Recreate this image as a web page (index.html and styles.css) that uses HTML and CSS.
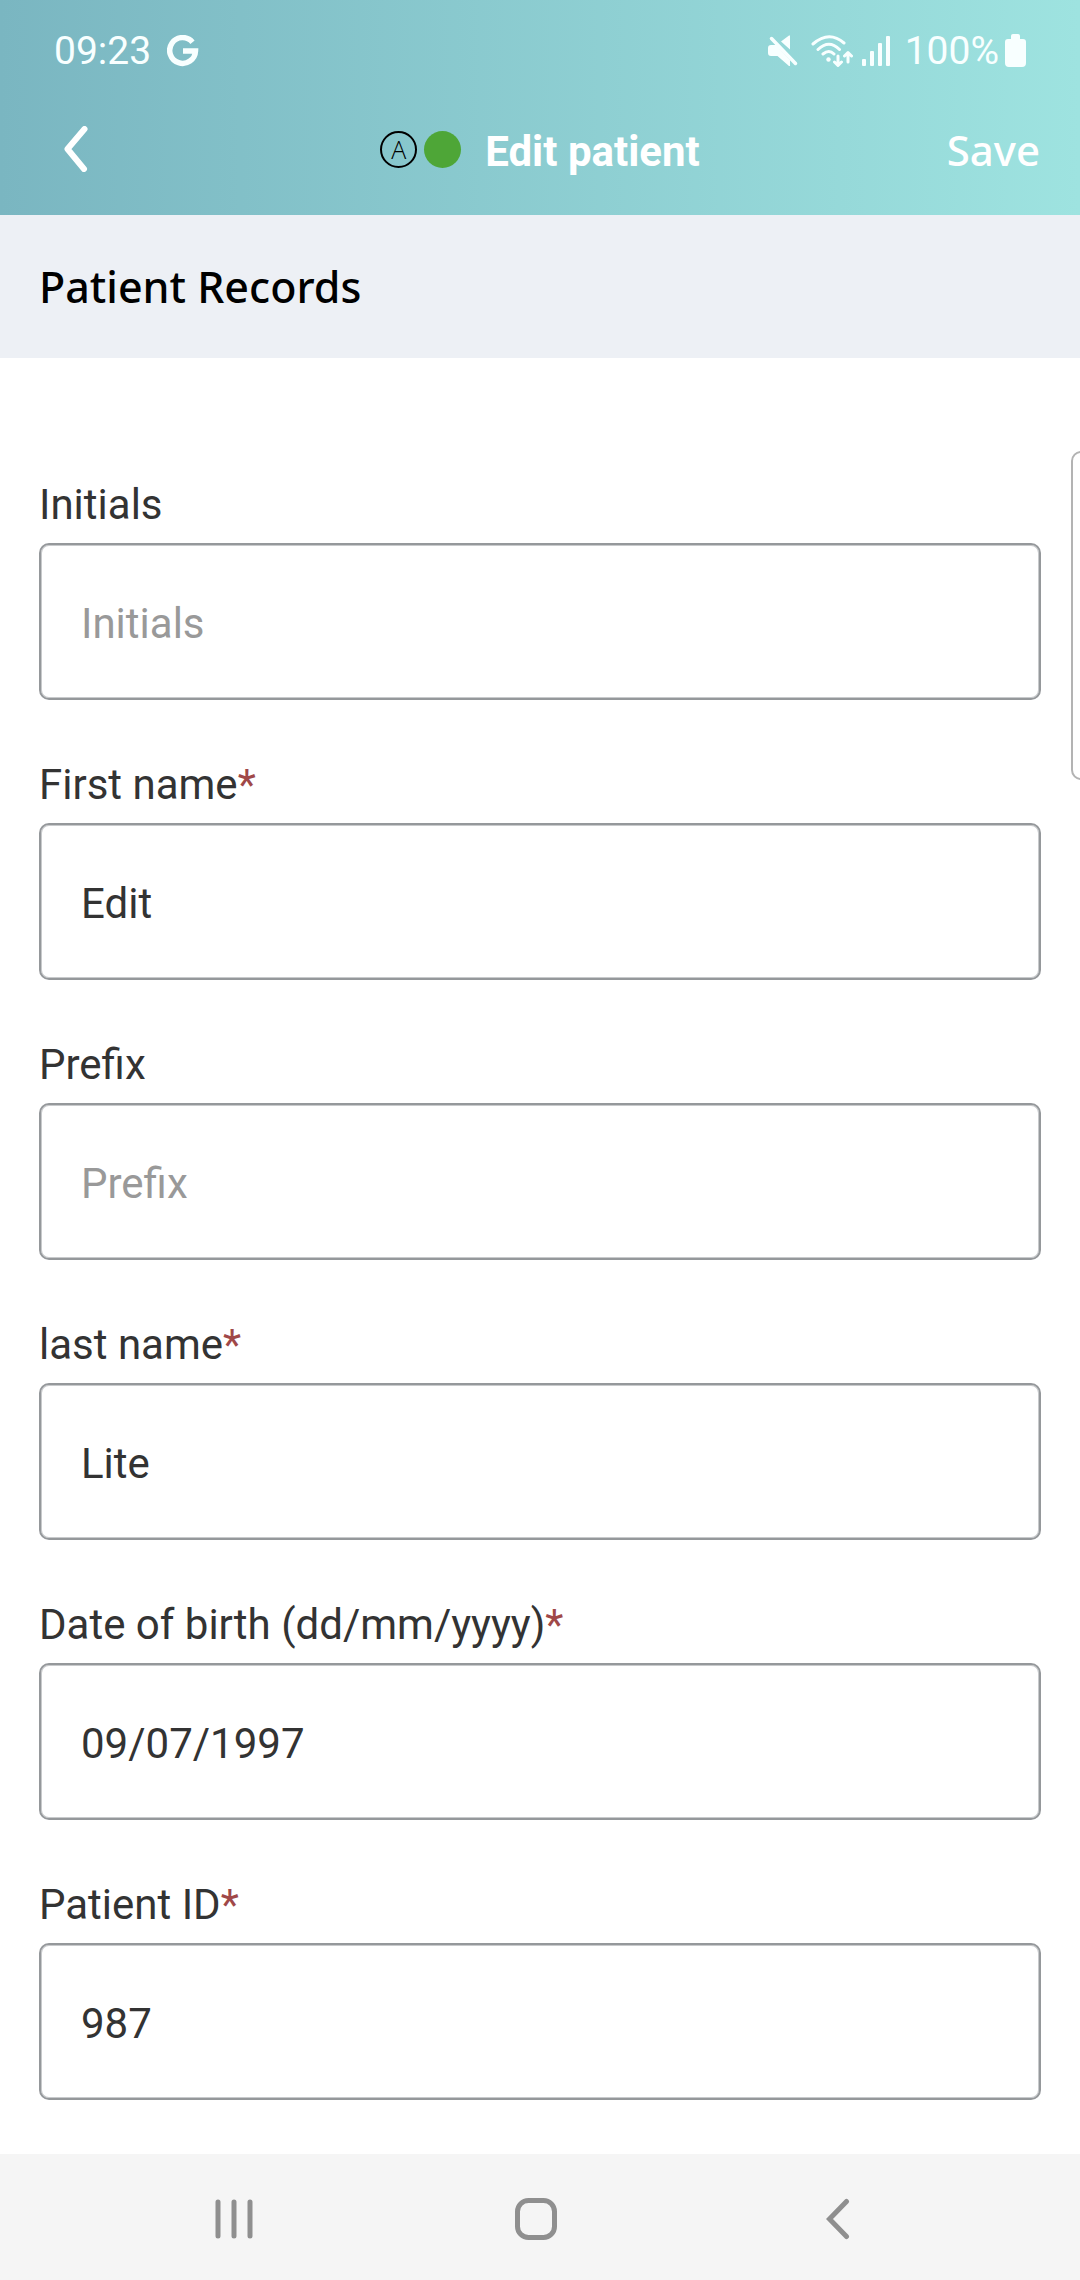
FILE: index.html
```html
<!DOCTYPE html>
<html lang="en">
<head>
<meta charset="utf-8">
<meta name="viewport" content="width=device-width, initial-scale=1">
<title>Edit patient</title>
<link rel="stylesheet" href="styles.css">
</head>
<body>
<div class="app">
  <header class="header">
    <div class="status">
      <div class="status-group status-left">
        <span>09:23</span>
        <svg class="icon" width="32" height="32" viewBox="0 0 32 32"><path d="M25.500 7.200A12.900 12.900 0 1 0 28.500 16H16" fill="none" stroke="currentColor" stroke-width="5.500"/></svg>
      </div>
      <div class="status-group status-right">
        <svg class="icon mute" width="30" height="32" viewBox="0 0 30 32" fill="currentColor"><path d="M0 13q0-3 3-3h5L22 25v6h-1L9.500 21H3q-3 0-3-3zM13 6.500 21 .500h1v14z"/><path d="M3.500 3.500 27.500 28.500" stroke="currentColor" stroke-width="3.500" stroke-linecap="round"/></svg>
        <svg class="icon wifi" width="42" height="32" viewBox="0 0 42 32" fill="none" stroke="currentColor" stroke-width="3" stroke-linecap="round" stroke-linejoin="round"><path d="M2 9Q18-5 33 8M7 14.500Q18 4 28.500 14.500M12 19Q18 14 23 19M27 21v9M23.500 27l3.500 3.500 3.500-3.500M37 27v-9M33.500 21l3.500-3.500 3.500 3.500"/><circle cx="17.500" cy="24.500" r="2.200" fill="currentColor" stroke="none"/></svg>
        <svg class="icon signal" width="28" height="30" viewBox="0 0 28 30" fill="currentColor"><rect y="23" width="4" height="7" rx="1"/><rect x="8" y="15" width="4" height="15" rx="1"/><rect x="16" y="7" width="4" height="23" rx="1"/><rect x="24" width="4" height="30" rx="1"/></svg>
        <span>100%</span>
        <svg class="icon battery" width="21" height="33" viewBox="0 0 21 33" fill="currentColor"><path d="M6 2q0-2 2-2h5q2 0 2 2v3h3q3 0 3 3v21q0 4-4 4H4q-4 0-4-4V8q0-3 3-3h3z"/></svg>
      </div>
    </div>
    <div class="toolbar">
      <button class="back" type="button" aria-label="Back">
        <svg class="icon" width="24" height="46" viewBox="0 0 24 46" fill="none" stroke="currentColor" stroke-width="6" stroke-linecap="round" stroke-linejoin="round"><path d="M20.500 3 3.500 23 20 43"/></svg>
      </button>
      <div class="heading">
        <span class="badge">A</span>
        <span class="dot"></span>
        <h1 class="title">Edit patient</h1>
      </div>
      <button class="save" type="submit" form="patient">Save</button>
    </div>
  </header>
  <h2 class="section">Patient Records</h2>
  <form class="form" id="patient">
    <div class="field">
      <label class="label" for="initials">Initials</label>
      <input class="input" id="initials" type="text" placeholder="Initials">
    </div>
    <div class="field">
      <label class="label" for="first">First name<span class="required">*</span></label>
      <input class="input" id="first" type="text" value="Edit">
    </div>
    <div class="field">
      <label class="label" for="prefix">Prefix</label>
      <input class="input" id="prefix" type="text" placeholder="Prefix">
    </div>
    <div class="field">
      <label class="label" for="last">last name<span class="required">*</span></label>
      <input class="input" id="last" type="text" value="Lite">
    </div>
    <div class="field">
      <label class="label" for="dob">Date of birth (dd/mm/yyyy)<span class="required">*</span></label>
      <input class="input" id="dob" type="text" value="09/07/1997">
    </div>
    <div class="field">
      <label class="label" for="pid">Patient ID<span class="required">*</span></label>
      <input class="input" id="pid" type="text" value="987">
    </div>
  </form>
  <nav class="nav">
    <button class="nav-button" type="button" aria-label="Recent apps">
      <svg class="icon" width="38" height="42" viewBox="0 0 38 42" stroke="currentColor" stroke-width="5" stroke-linecap="round"><path d="M3 4v34M19 4v34M35 4v34"/></svg>
    </button>
    <button class="nav-button" type="button" aria-label="Home">
      <svg class="icon" width="42" height="42" viewBox="0 0 42 42" fill="none" stroke="currentColor" stroke-width="5"><rect x="2.500" y="2.500" width="37" height="37" rx="11"/></svg>
    </button>
    <button class="nav-button" type="button" aria-label="Back">
      <svg class="icon" width="24" height="42" viewBox="0 0 24 42" fill="none" stroke="currentColor" stroke-width="5" stroke-linecap="round"><path d="M20.500 3.500 3.500 21 20.500 38.500"/></svg>
    </button>
  </nav>
  <div class="edge-handle"></div>
</div>
</body>
</html>
```
FILE: styles.css
```css
* {
  box-sizing: border-box;
}

body {
  margin: 0;
  background: #fff;
  color: #333;
  font-family: Roboto, "Liberation Sans", sans-serif;
  font-size: 42px;
}

button {
  border: 0;
  padding: 0;
  background: none;
  color: inherit;
  font: inherit;
}

.app {
  position: relative;
  display: flex;
  flex-direction: column;
  min-height: 100vh;
  overflow: hidden;
}

.icon {
  display: block;
  flex: none;
}

.header {
  padding-bottom: 16px;
  background: linear-gradient(90deg, #7ab6c1, #9ee3e0);
  color: #fff;
}

.status {
  display: flex;
  justify-content: space-between;
  height: 99px;
  padding: 2px 54px 0;
  color: #f8ffff;
  font-size: 39px;
}

.status-group {
  display: flex;
  align-items: center;
}

.status-left {
  gap: 16px;
}

.mute {
  margin-right: 13px;
}

.wifi {
  margin-right: 9px;
}

.signal {
  margin-right: 15px;
}

.battery {
  margin-left: 6px;
}

.toolbar {
  display: grid;
  grid-template-columns: 1fr auto 1fr;
  align-items: center;
  height: 100px;
  padding: 0 40px;
}

.back {
  justify-self: start;
  padding: 0 24px;
}

.heading {
  display: flex;
  align-items: center;
}

.badge,
.dot {
  width: 37px;
  height: 37px;
  border-radius: 50%;
}

.badge {
  margin-right: 7px;
  border: 2px solid #000;
  color: #000;
  font: 300 25px/32px "Open Sans", sans-serif;
  text-align: center;
}

.dot {
  background: #4ea637;
}

.title {
  margin: 0 0 0 24px;
  padding-top: 4px;
  font-size: 42px;
  font-weight: 700;
}

.save,
.section {
  font-family: "Noto Sans", sans-serif;
  font-weight: 500;
}

.save {
  justify-self: end;
  font-size: 42px;
}

.section {
  margin: 0;
  padding: 0 39px;
  background: #edf0f5;
  color: #000;
  font-size: 43px;
  line-height: 143px;
}

.form {
  display: flex;
  flex: 1;
  flex-direction: column;
  gap: 57px;
  padding: 119px 39px 54px;
}

.field {
  display: flex;
  flex-direction: column;
  gap: 10px;
}

.label {
  line-height: 56px;
}

.required {
  color: #a04848;
}

.input {
  width: 100%;
  height: 157px;
  padding: 3px 40px 0;
  border: 2px solid #95989b;
  border-radius: 10px;
  background: #fff;
  box-shadow: inset 0 0 0 1px #c8cacc;
  color: #333;
  font: inherit;
}

.input::placeholder {
  color: #999;
  opacity: 1;
}

.nav {
  display: grid;
  grid-template-columns: repeat(3, 1fr);
  height: 126px;
  padding: 4px 91px 0 83px;
  background: #f5f5f5;
  color: #8f8f8f;
}

.nav-button {
  display: grid;
  place-items: center;
}

/* Pull-out panel handle on the screen edge */
.edge-handle {
  position: absolute;
  top: 451px;
  right: -11px;
  width: 20px;
  height: 329px;
  border: 2px solid #b3b3b3;
  border-radius: 11px;
  background: #fff;
}
```
